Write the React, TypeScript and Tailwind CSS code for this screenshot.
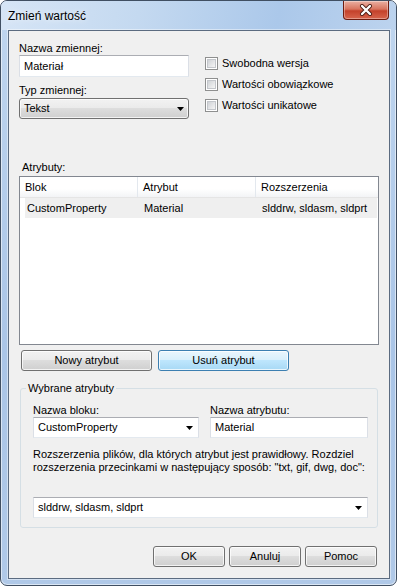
import React from 'react';

const FONT = "font-['Liberation_Sans',Arial,sans-serif]";

// Small black combo arrow
function Arrow() {
  return (
    <svg width="7" height="4" viewBox="0 0 7 4" className="shrink-0">
      <path d="M0 0h7L3.5 4z" fill="#000" />
    </svg>
  );
}

function Button({ label, hot, className }: { label: string; hot?: boolean; className?: string }) {
  return (
    <div
      className={`h-[21px] flex items-center justify-center rounded-[3px] border text-[11px] leading-[13px] text-black shadow-[inset_0_0_0_1px_rgba(255,255,255,0.75)] ${
        hot
          ? 'border-[#3c7fb1] bg-[linear-gradient(to_bottom,#eaf6fd_0%,#d9f0fc_45%,#bee6fd_50%,#a7d9f5_100%)]'
          : 'border-[#707070] bg-[linear-gradient(to_bottom,#f2f2f2_0%,#ebebeb_45%,#dddddd_50%,#cfcfcf_100%)]'
      } ${className ?? ''}`}
    >
      {label}
    </div>
  );
}

function TextBox({ value, className }: { value: string; className?: string }) {
  return (
    <div
      className={`flex items-center pl-[4px] bg-white border border-[#dbdfe6] border-t-[#abadb3] border-b-[#e3e9ef] text-[11px] text-black ${className ?? ''}`}
    >
      {value}
    </div>
  );
}

function Combo({ value, className }: { value: string; className?: string }) {
  return (
    <div
      className={`flex items-center justify-between pl-[4px] pr-[5px] bg-white border border-[#dbdfe6] border-t-[#abadb3] border-b-[#e3e9ef] text-[11px] text-black ${className ?? ''}`}
    >
      <span>{value}</span>
      <Arrow />
    </div>
  );
}

function Check({ label }: { label: string }) {
  return (
    <div className="h-[21px] flex items-center gap-[4px] text-[11px] text-black">
      <div className="w-[13px] h-[13px] border border-[#8e8f8f] bg-white p-[1px]">
        <div className="w-full h-full border border-[#c3c6cb] bg-[linear-gradient(135deg,#cfd2d6,#f5f5f5)]" />
      </div>
      <span>{label}</span>
    </div>
  );
}

export default function App() {
  return (
    <div className="w-[397px] h-[586px] bg-white">
      <div
        className={`w-[397px] h-[586px] flex flex-col rounded-[7px] border border-[#404f62] overflow-hidden bg-[linear-gradient(to_bottom,#c0d6ef,#aac5e7_60%,#b0c9e8)] shadow-[inset_0_0_0_1px_rgba(255,255,255,0.55)] ${FONT}`}
      >
        {/* Title bar */}
        <div className="h-[29px] shrink-0 flex items-start justify-between bg-[linear-gradient(100deg,#d6e5f6_0%,#c4d9f0_35%,#abc8ea_70%,#bcd3ee_100%)]">
          <div className="pl-[7px] pt-[8px] text-[12px] leading-[14px] text-black [text-shadow:0_0_6px_rgba(255,255,255,0.9)]">
            Zmień wartość
          </div>
          <div className="mr-[7px] w-[46px] h-[19px] rounded-b-[4px] border border-t-0 border-[#6e1c10] bg-[linear-gradient(to_bottom,#eab0a3_0%,#d8745f_45%,#c4412b_55%,#d7654d_100%)] shadow-[inset_0_0_0_1px_rgba(255,255,255,0.35)] flex items-center justify-center">
            <svg width="14" height="12" viewBox="0 0 14 12">
              <path d="M3 2l8 8M11 2l-8 8" stroke="#4a1a12" strokeWidth="4" strokeLinecap="round" />
              <path d="M3 2l8 8M11 2l-8 8" stroke="#ffffff" strokeWidth="2.4" strokeLinecap="round" />
            </svg>
          </div>
        </div>

        {/* Client area */}
        <div className="ml-[7px] mr-[6px] h-[549px] shrink-0 border border-[#5b6b80] bg-[#f0f0f0] shadow-[0_0_0_1px_rgba(255,255,255,0.45)] flex flex-col">
          {/* Top section */}
          <div className="flex">
            <div className="ml-[10px] w-[170px] pt-[11px] flex flex-col">
              <div className="h-[13px] leading-[13px] text-[11px] text-black">Nazwa zmiennej:</div>
              <TextBox value="Materiał" className="h-[22px]" />
              <div className="mt-[7px] h-[13px] leading-[13px] text-[11px] text-black">Typ zmiennej:</div>
              <div className="mt-[1px] h-[21px] flex items-center justify-between pl-[4px] pr-[4px] rounded-[3px] border border-[#707070] bg-[linear-gradient(to_bottom,#f2f2f2_0%,#ebebeb_45%,#dddddd_50%,#cfcfcf_100%)] shadow-[inset_0_0_0_1px_rgba(255,255,255,0.75)] text-[11px] text-black">
                <span>Tekst</span>
                <Arrow />
              </div>
            </div>
            <div className="ml-[16px] pt-[22px] flex flex-col">
              <Check label="Swobodna wersja" />
              <Check label="Wartości obowiązkowe" />
              <Check label="Wartości unikatowe" />
            </div>
          </div>

          {/* Attributes list */}
          <div className="ml-[13px] mt-[42px] h-[13px] leading-[13px] text-[11px] text-black">Atrybuty:</div>
          <div className="ml-[10px] mt-[2px] w-[360px] h-[169px] shrink-0 border border-[#828790] bg-white flex flex-col text-[11px] text-black">
            <div className="h-[21px] flex border-b border-[#e5e5e5] bg-[linear-gradient(to_bottom,#ffffff_60%,#f3f4f6)]">
              <div className="w-[118px] pl-[5px] flex items-center border-r border-[#e3e8ee]">Blok</div>
              <div className="w-[118px] pl-[5px] flex items-center border-r border-[#e3e8ee]">Atrybut</div>
              <div className="flex-1 pl-[5px] flex items-center">Rozszerzenia</div>
            </div>
            <div className="ml-[5px] mr-[1px] h-[20px] flex bg-[#efefef]">
              <div className="w-[117px] pl-[2px] flex items-center">CustomProperty</div>
              <div className="w-[118px] pl-[2px] flex items-center">Material</div>
              <div className="flex-1 pl-[2px] flex items-center">slddrw, sldasm, sldprt</div>
            </div>
          </div>

          {/* List buttons */}
          <div className="ml-[12px] mt-[5px] flex gap-[6px]">
            <Button label="Nowy atrybut" className="w-[131px]" />
            <Button label="Usuń atrybut" hot className="w-[131px]" />
          </div>

          {/* Selected attributes group */}
          <fieldset className="ml-[11px] mt-[11px] w-[358px] border border-[#d5dfe5] rounded-[3px] pl-[12px] pb-[9px]">
            <legend className="ml-[-7px] px-[2px] h-[13px] leading-[13px] text-[11px] text-black">Wybrane atrybuty</legend>
            <div className="mt-[9px] flex">
              <div className="w-[166px] flex flex-col">
                <div className="h-[13px] leading-[13px] text-[11px] text-black">Nazwa bloku:</div>
                <Combo value="CustomProperty" className="h-[21px]" />
              </div>
              <div className="ml-[11px] w-[158px] flex flex-col">
                <div className="h-[13px] leading-[13px] text-[11px] text-black">Nazwa atrybutu:</div>
                <TextBox value="Material" className="h-[21px]" />
              </div>
            </div>
            <p className="mt-[10px] text-[11px] leading-[13px] text-black whitespace-nowrap">
              Rozszerzenia plików, dla których atrybut jest prawidłowy. Rozdziel
              <br />
              rozszerzenia przecinkami w następujący sposób: "txt, gif, dwg, doc":
            </p>
            <Combo value="slddrw, sldasm, sldprt" className="mt-[23px] w-[335px] h-[21px]" />
          </fieldset>

          {/* Dialog buttons */}
          <div className="ml-[144px] mt-[18px] flex gap-[4px]">
            <Button label="OK" className="w-[72px]" />
            <Button label="Anuluj" className="w-[72px]" />
            <Button label="Pomoc" className="w-[72px]" />
          </div>
        </div>
      </div>
    </div>
  );
}
